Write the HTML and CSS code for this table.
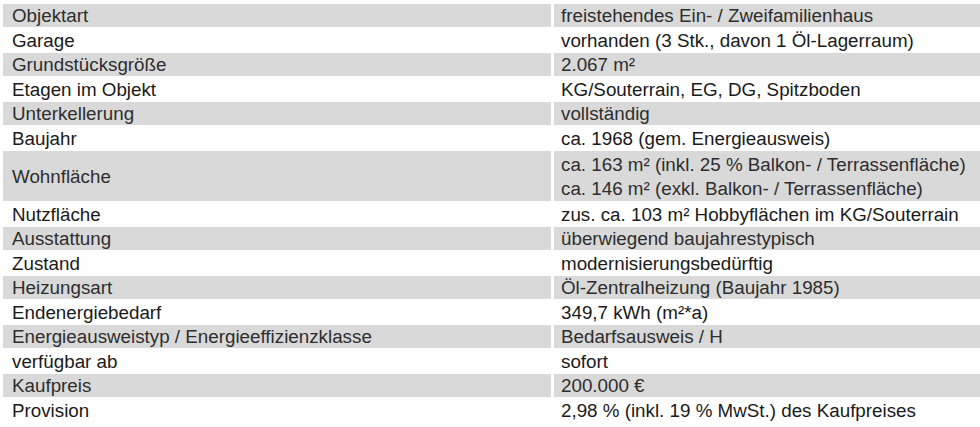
FILE: index.html
```html
<!DOCTYPE html>
<html lang="de">
<head>
<meta charset="utf-8">
<title>Objektdaten</title>
<link rel="stylesheet" href="styles.css">
</head>
<body>
<table class="facts">
  <tr class="odd"><td class="label">Objektart</td><td class="value">freistehendes Ein- / Zweifamilienhaus</td></tr>
  <tr class="even"><td class="label">Garage</td><td class="value">vorhanden (3 Stk., davon 1 Öl-Lagerraum)</td></tr>
  <tr class="odd"><td class="label">Grundstücksgröße</td><td class="value">2.067 m²</td></tr>
  <tr class="even"><td class="label">Etagen im Objekt</td><td class="value">KG/Souterrain, EG, DG, Spitzboden</td></tr>
  <tr class="odd"><td class="label">Unterkellerung</td><td class="value">vollständig</td></tr>
  <tr class="even"><td class="label">Baujahr</td><td class="value">ca. 1968 (gem. Energieausweis)</td></tr>
  <tr class="odd"><td class="label">Wohnfläche</td><td class="value"><div class="line">ca. 163 m² (inkl. 25 % Balkon- / Terrassenfläche)</div><div class="line">ca. 146 m² (exkl. Balkon- / Terrassenfläche)</div></td></tr>
  <tr class="even"><td class="label">Nutzfläche</td><td class="value">zus. ca. 103 m² Hobbyflächen im KG/Souterrain</td></tr>
  <tr class="odd"><td class="label">Ausstattung</td><td class="value">überwiegend baujahrestypisch</td></tr>
  <tr class="even"><td class="label">Zustand</td><td class="value">modernisierungsbedürftig</td></tr>
  <tr class="odd"><td class="label">Heizungsart</td><td class="value">Öl-Zentralheizung (Baujahr 1985)</td></tr>
  <tr class="even"><td class="label">Endenergiebedarf</td><td class="value">349,7 kWh (m²*a)</td></tr>
  <tr class="odd"><td class="label">Energieausweistyp / Energieeffizienzklasse</td><td class="value">Bedarfsausweis / H</td></tr>
  <tr class="even"><td class="label">verfügbar ab</td><td class="value">sofort</td></tr>
  <tr class="odd"><td class="label">Kaufpreis</td><td class="value">200.000 €</td></tr>
  <tr class="even"><td class="label">Provision</td><td class="value">2,98 % (inkl. 19 % MwSt.) des Kaufpreises</td></tr>
</table>
</body>
</html>
```
FILE: styles.css
```css
html, body {
  margin: 0;
  padding: 0;
  background: #ffffff;
  overflow: hidden;
}
body {
  font-family: "Liberation Sans", Arial, sans-serif;
  font-size: 18.8px;
  color: #2e2e2e;
}
.facts {
  border-collapse: separate;
  border-spacing: 3px 2px;
  margin-top: 2px;
  width: 1000px;
  table-layout: fixed;
}
.facts td {
  padding: 2px 7px 0 9px;
  line-height: 20.5px;
  vertical-align: middle;
  white-space: nowrap;
  overflow: hidden;
}
.facts .label {
  width: 532px;
}
.facts .value {
  padding-left: 7px;
}
.facts tr.odd td {
  background: #d9d9d9;
}
.facts tr.even td {
  background: #ffffff;
  color: #1a1a1a;
}
.facts .line {
  line-height: 23.75px;
}
```
